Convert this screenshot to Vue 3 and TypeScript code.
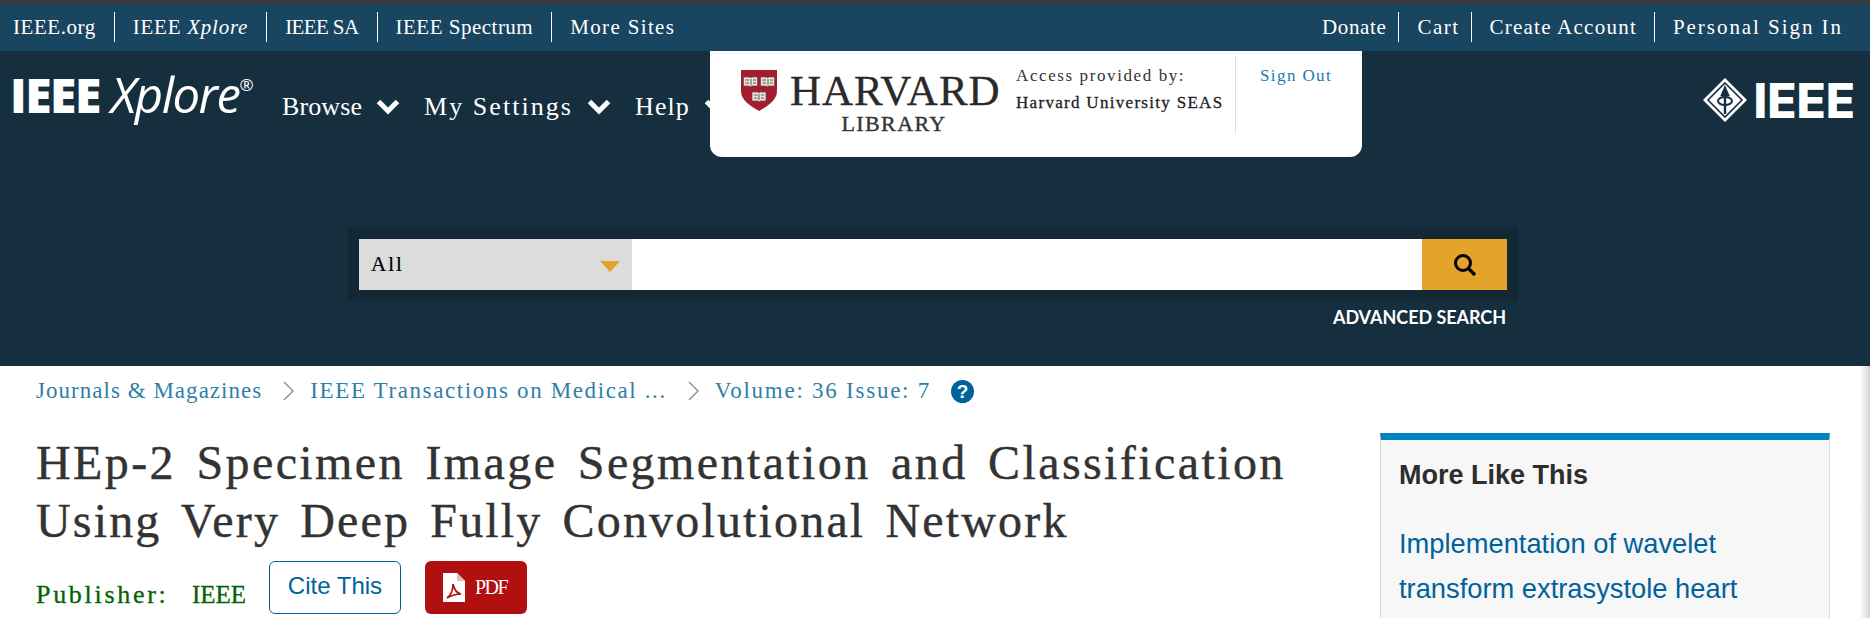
<script setup lang="ts">
const leftLinks = ['IEEE.org', 'IEEE Xplore', 'IEEE SA', 'IEEE Spectrum', 'More Sites']
const rightLinks = ['Donate', 'Cart', 'Create Account', 'Personal Sign In']
</script>

<template>
  <div class="page">
    <div class="top-strip"></div>
    <nav class="top-bar">
      <ul class="top-list">
        <li v-for="link in leftLinks" :key="link">
          <template v-if="link === 'IEEE Xplore'">IEEE <em>Xplore</em></template>
          <template v-else>{{ link }}</template>
        </li>
      </ul>
      <ul class="top-list right">
        <li v-for="link in rightLinks" :key="link">{{ link }}</li>
      </ul>
    </nav>

    <header class="header">
      <div class="head-row">
        <div class="logo"><b>IEEE</b><i>Xplore</i><sup>®</sup></div>
        <div class="main-nav">
          <span class="n1">Browse<svg class="chev" viewBox="0 0 24 16"><path d="M2.5 2.5l9.5 9.5 9.5-9.5" fill="none" stroke="#fff" stroke-width="5" /></svg></span>
          <span class="n2">My Settings<svg class="chev" viewBox="0 0 24 16"><path d="M2.5 2.5l9.5 9.5 9.5-9.5" fill="none" stroke="#fff" stroke-width="5" /></svg></span>
          <span class="n3">Help<svg class="chev" viewBox="0 0 24 16"><path d="M2.5 2.5l9.5 9.5 9.5-9.5" fill="none" stroke="#fff" stroke-width="5" /></svg></span>
        </div>
        <div class="ieee-logo">
          <svg class="diamond" viewBox="0 0 44 44">
            <path d="M22 0l22 22-22 22L0 22z" fill="#fff" />
            <path d="M22 5l17 17-17 17L5 22z" fill="none" stroke="#152f3f" stroke-width="1.6" />
            <path d="M22 9v27M19 17l3-7 3 7z" stroke="#152f3f" stroke-width="2.4" fill="#152f3f" />
            <ellipse cx="22" cy="23" rx="7" ry="4" fill="none" stroke="#152f3f" stroke-width="2" />
          </svg>
          <span>IEEE</span>
        </div>
      </div>

      <div class="access-card">
        <div class="harvard">
          <svg class="shield" viewBox="0 0 36 41">
            <path d="M0 0h36v21c0 9-9 15-18 20C9 36 0 30 0 21z" fill="#a51c30" />
            <g fill="#e8e2da" stroke="#5a4a44" stroke-width=".7">
              <path d="M2.5 7h6l1 1 1-1h6v9h-6l-1 1-1-1h-6z" />
              <path d="M19.5 7h6l1 1 1-1h6v9h-6l-1 1-1-1h-6z" />
              <path d="M11 22h6l1 1 1-1h6v9h-6l-1 1-1-1h-6z" />
            </g>
            <g stroke="#5a4a44" stroke-width=".9">
              <path d="M10 9v6M27 9v6M18 24v6" />
              <path d="M4.500 10h3.500M4.500 13h3.500M12 10h3M12 13h3M21.500 10h3.500M21.500 13h3.500M29 10h3M29 13h3M13 25h3.500M13 28h3.500M20 25h3M20 28h3" />
            </g>
          </svg>
          <div class="harvard-name">
            <div class="h-big">HARVARD</div>
            <div class="h-small">LIBRARY</div>
          </div>
        </div>
        <div class="access-text">
          <div class="provided">Access provided by:</div>
          <div class="inst">Harvard University SEAS</div>
        </div>
        <div class="sign-out">Sign Out</div>
      </div>

      <div class="search-wrap">
        <div class="search-box">
          <div class="search-select">
            <span>All</span>
            <span class="tri"></span>
          </div>
          <div class="search-input"></div>
          <div class="search-btn">
            <svg viewBox="0 0 24 24" width="24" height="24">
              <circle cx="10" cy="10" r="7.500" fill="none" stroke="#000" stroke-width="3" />
              <path d="M15.500 15.500L22 22" stroke="#000" stroke-width="3.400" />
            </svg>
          </div>
        </div>
      </div>
      <div class="advanced">ADVANCED SEARCH</div>
    </header>

    <main class="content">
      <section class="article">
        <div class="crumbs">
          <a class="c1">Journals &amp; Magazines</a>
          <svg class="sep" viewBox="0 0 12 20"><path d="M1 1l9 9-9 9" fill="none" stroke="#888" stroke-width="1.3" /></svg>
          <a class="c2">IEEE Transactions on Medical ...</a>
          <svg class="sep" viewBox="0 0 12 20"><path d="M1 1l9 9-9 9" fill="none" stroke="#888" stroke-width="1.3" /></svg>
          <a class="c3">Volume: 36 Issue: 7</a>
          <span class="help">?</span>
        </div>
        <h1 class="title">
          <span class="l1">HEp-2 Specimen Image Segmentation and Classification</span>
          <span class="l2">Using Very Deep Fully Convolutional Network</span>
        </h1>
        <div class="meta">
          <div class="publisher"><span class="pub-label">Publisher:</span><span class="pub-name">IEEE</span></div>
          <button class="cite">Cite This</button>
          <button class="pdf">
            <svg viewBox="0 0 22 29" width="22" height="29">
              <path d="M0 0h14l8 8v21H0z" fill="#fff" />
              <path d="M14 0l8 8h-8z" fill="#e9b9b9" />
              <path d="M4 25c4-3 6-8 6-14 1 5 3 9 8 10-5 0-9 1-14 4z" fill="none" stroke="#b01010" stroke-width="1.600" />
            </svg>
            <span>PDF</span>
          </button>
        </div>
      </section>

      <aside class="more">
        <h2>More Like This</h2>
        <a>Implementation of wavelet<br />transform extrasystole heart</a>
      </aside>
    </main>
    <div class="edge-shadow"></div>
  </div>
</template>

<style>
html, body {
  margin: 0;
  background: #fff;
  overflow: hidden;
}
</style>

<style scoped>
.page {
  width: 1870px;
  height: 618px;
  overflow: hidden;
  position: relative;
  font-family: "Liberation Serif", serif;
}

.top-strip {
  height: 4px;
  background: #3a3a3a;
}

.top-bar {
  height: 47px;
  background: #1a4560;
  color: #fff;
  display: flex;
  justify-content: space-between;
  box-sizing: border-box;
  padding: 8px 27px 0 0;
}

.top-list {
  display: flex;
  list-style: none;
  margin: 0;
  padding: 0;
  font-size: 21px;
}

.top-list li {
  height: 30px;
  line-height: 30px;
  padding: 0 18px;
  border-right: 1px solid #fff;
  white-space: nowrap;
}

.top-list li:first-child {
  padding-left: 13px;
  letter-spacing: .55px;
}

.top-list li:nth-child(2) {
  letter-spacing: .75px;
}

.top-list li:nth-child(3) {
  letter-spacing: -.6px;
}

.top-list li:nth-child(4) {
  letter-spacing: .5px;
}

.top-list li:nth-child(5) {
  letter-spacing: 1.35px;
  border-right: none;
}

.top-list.right li:first-child {
  padding: 0 12px 0 18px;
  letter-spacing: .65px;
}

.top-list.right li:nth-child(2) {
  padding-right: 12px;
  letter-spacing: 1.45px;
}

.top-list.right li:nth-child(3) {
  padding: 0 17px;
  letter-spacing: 1.25px;
}

.top-list.right li:last-child {
  padding-right: 0;
  letter-spacing: 1.95px;
  border-right: none;
}

.header {
  height: 315px;
  background: #152f3f;
  position: relative;
  color: #fff;
  box-sizing: border-box;
  padding-top: 17px;
}

.head-row {
  display: flex;
  height: 159px;
  padding: 0 15px 0 10px;
}

.logo {
  font-family: "Open Sans", sans-serif;
  font-size: 48px;
  line-height: 52px;
  white-space: nowrap;
  width: 272px;
  height: 60px;
}

.logo b {
  font-weight: 800;
  letter-spacing: -1.5px;
}

.logo i {
  font-weight: 400;
  font-size: 49px;
  margin-left: 11px;
  letter-spacing: -1.5px;
}

.logo sup {
  font-size: 17px;
  line-height: 0;
  vertical-align: 22px;
  font-weight: 400;
}

.main-nav {
  display: flex;
  gap: 24px;
  font-size: 26px;
  height: 60px;
  padding-top: 18px;
  line-height: 44px;
  box-sizing: border-box;
  white-space: nowrap;
}

.main-nav span {
  display: flex;
  align-items: center;
}

.n1 {
  letter-spacing: .1px;
}

.n2 {
  letter-spacing: 2.05px;
}

.n3 {
  letter-spacing: 1.1px;
}

.chev {
  width: 24px;
  height: 16px;
  margin-left: 14px;
}

.ieee-logo {
  margin-left: auto;
  display: flex;
  align-items: center;
  gap: 6px;
  height: 44px;
  margin-top: 10px;
  font-family: Inter, sans-serif;
  font-weight: 800;
  font-size: 48px;
}

.diamond {
  width: 44px;
  height: 44px;
}

.access-card {
  position: absolute;
  left: 710px;
  top: 0;
  width: 652px;
  height: 106px;
  background: #fff;
  border-radius: 0 0 12px 12px;
  color: #333;
  display: flex;
  box-sizing: border-box;
  padding: 6px 0 0 31px;
}

.harvard {
  display: flex;
  width: 275px;
  height: 80px;
}

.shield {
  width: 36px;
  height: 41px;
  margin-top: 13px;
}

.harvard-name {
  margin-left: 13px;
  color: #2a2a2a;
  text-align: center;
  width: 208px;
  white-space: nowrap;
}

.h-big {
  font-size: 43px;
  line-height: 44px;
  margin-top: 12px;
  letter-spacing: 1px;
  -webkit-text-stroke: .3px #2a2a2a;
}

.h-small {
  font-size: 22px;
  line-height: 24px;
  letter-spacing: 1.400px;
  margin-top: -1px;
  color: #333;
  -webkit-text-stroke: .4px #333;
}

.access-text {
  width: 219px;
  border-right: 1px solid #ddd;
  height: 76px;
  font-size: 17px;
  white-space: nowrap;
}

.provided {
  margin-top: 6px;
  line-height: 26px;
  letter-spacing: 1.6px;
}

.inst {
  margin-top: 1px;
  line-height: 26px;
  color: #222;
  letter-spacing: 1.3px;
  -webkit-text-stroke: .3px #222;
}

.sign-out {
  margin: 6px 0 0 24px;
  font-size: 17px;
  letter-spacing: 1.4px;
  line-height: 26px;
  color: #1a7ab0;
}

.search-wrap {
  margin-left: 348px;
  width: 1170px;
  height: 74px;
  background: #122834;
  box-sizing: border-box;
  padding: 12px 11px;
}

.search-box {
  display: flex;
  height: 51px;
}

.search-select {
  width: 273px;
  background: #dcdcdc;
  color: #000;
  display: flex;
  align-items: center;
  justify-content: space-between;
  box-sizing: border-box;
  padding: 0 12px;
  font-size: 21px;
  letter-spacing: 2px;
  -webkit-text-stroke: .2px #000;
}

.tri {
  width: 0;
  height: 0;
  border-left: 10px solid transparent;
  border-right: 10px solid transparent;
  border-top: 11px solid #e4a42b;
  margin-top: 3px;
}

.search-input {
  flex: 1;
  background: #fff;
}

.search-btn {
  width: 85px;
  background: #e4a42b;
  display: flex;
  align-items: center;
  justify-content: center;
}

.advanced {
  margin: 4px 0 0 0;
  padding-right: 364px;
  text-align: right;
  font-family: Lato, sans-serif;
  font-weight: 700;
  font-size: 18px;
  line-height: 24px;
  letter-spacing: -.05px;
}

.content {
  display: flex;
  justify-content: space-between;
  padding: 0 40px 0 36px;
}

.crumbs {
  display: flex;
  align-items: center;
  height: 50px;
  font-size: 23px;
  color: #2f7fa8;
  white-space: nowrap;
}

.c1 {
  letter-spacing: 1.03px;
}

.c2 {
  letter-spacing: 1.62px;
}

.c3 {
  letter-spacing: 1.75px;
}

.sep {
  width: 12px;
  height: 20px;
  margin: 0 15px 0 21px;
}

.help {
  width: 23px;
  height: 23px;
  margin-left: 20px;
  border-radius: 50%;
  background: #00629b;
  color: #fff;
  text-align: center;
  font-family: "Liberation Sans", sans-serif;
  font-weight: 700;
  font-size: 19px;
  line-height: 23px;
}

.title {
  margin: 18px 0 0;
  font-size: 48px;
  font-weight: 400;
  line-height: 58px;
  color: #333;
  word-spacing: 6px;
  -webkit-text-stroke: .4px #333;
  white-space: nowrap;
}

.title span {
  display: block;
}

.l1 {
  letter-spacing: 2.41px;
}

.l2 {
  letter-spacing: 2.16px;
}

.meta {
  display: flex;
  align-items: flex-start;
  margin-top: 11px;
}

.publisher {
  color: #006400;
  width: 233px;
  line-height: 34px;
  margin-top: 17px;
  white-space: nowrap;
  display: flex;
  -webkit-text-stroke: .3px #006400;
}

.pub-label {
  font-size: 26px;
  letter-spacing: 2.7px;
  width: 156px;
}

.pub-name {
  font-size: 25px;
}

.cite,
.pdf {
  height: 53px;
  border-radius: 6px;
  box-sizing: border-box;
  cursor: pointer;
}

.cite {
  width: 132px;
  padding: 0 0 4px;
  background: #fff;
  border: 1px solid #00629b;
  color: #00629b;
  font-family: "Liberation Sans", sans-serif;
  font-size: 24px;
}

.pdf {
  width: 102px;
  margin-left: 24px;
  background: #b01010;
  border: none;
  color: #fff;
  display: flex;
  align-items: center;
  padding: 0 0 0 18px;
  gap: 10px;
  font-family: "Liberation Serif", serif;
  font-size: 20px;
  letter-spacing: -1.5px;
}

.more {
  width: 450px;
  height: 240px;
  margin-top: 67px;
  box-sizing: border-box;
  background: linear-gradient(#f7f7f7 80%, #efefef);
  border: 1px solid #ddd;
  border-top: 7px solid #0082c3;
  padding: 0 18px;
  font-family: "Liberation Sans", sans-serif;
}

.more h2 {
  margin: 20px 0 0;
  font-size: 27px;
  line-height: 30px;
  font-weight: 700;
  color: #2d2d2d;
}

.more a {
  display: block;
  margin-top: 31px;
  font-size: 27.3px;
  line-height: 45px;
  color: #00629b;
  white-space: nowrap;
}

/* faint shadow on the right edge, below the header */
.edge-shadow {
  position: absolute;
  right: 0;
  top: 366px;
  bottom: 0;
  width: 10px;
  background: linear-gradient(to right, rgba(200, 200, 200, 0), rgba(200, 200, 200, .8));
}
</style>
